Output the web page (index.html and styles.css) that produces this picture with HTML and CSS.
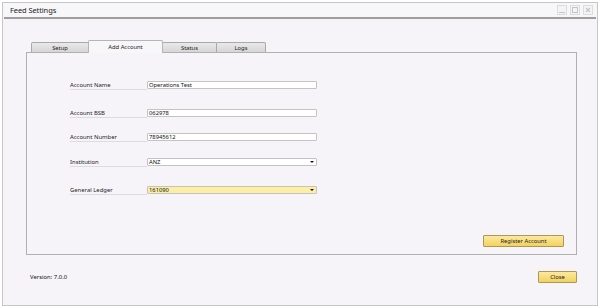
FILE: index.html
```html
<!DOCTYPE html>
<html>
<head>
<meta charset="utf-8">
<link rel="stylesheet" href="styles.css">
</head>
<body>
<div class="window">
  <div class="titlebar">
    <span class="title">Feed Settings</span>
    <div class="winbtns">
      <span class="wbtn"><svg width="8" height="8" viewBox="0 0 8 8"><path d="M1 6.5h6" stroke="#c4c4c4" stroke-width="1"/></svg></span>
      <span class="wbtn"><svg width="8" height="8" viewBox="0 0 8 8"><rect x="1.5" y="1.5" width="5" height="5" fill="none" stroke="#c4c4c4"/></svg></span>
      <span class="wbtn"><svg width="8" height="8" viewBox="0 0 8 8"><path d="M2 2l4 4M6 2l-4 4" stroke="#c4c4c4" stroke-width="1.2"/></svg></span>
    </div>
  </div>
  <div class="main">
    <div class="tabs">
      <div class="tab">Setup</div>
      <div class="tab active">Add Account</div>
      <div class="tab">Status</div>
      <div class="tab">Logs</div>
    </div>
    <div class="panel">
      <div class="form">
        <div class="row r1"><span class="label">Account Name</span><span class="field">Operations Test</span></div>
        <div class="row r2"><span class="label">Account BSB</span><span class="field">062978</span></div>
        <div class="row r3"><span class="label">Account Number</span><span class="field">78945612</span></div>
        <div class="row r4"><span class="label">Institution</span><span class="field select">ANZ<i class="arrow"></i></span></div>
        <div class="row r5"><span class="label">General Ledger</span><span class="field select hl">161090<i class="arrow"></i></span></div>
      </div>
      <div class="panel-actions"><button class="btn btn-register">Register Account</button></div>
    </div>
    <div class="footer">
      <span class="version">Version: 7.0.0</span>
      <button class="btn btn-close">Close</button>
    </div>
  </div>
</div>
</body>
</html>
```

FILE: styles.css
```css
* { box-sizing: border-box; }
html, body { margin: 0; padding: 0; }
body {
  background: #ffffff;
  padding: 2px;
  font-family: "Noto Sans", "Open Sans", sans-serif;
  color: #1a1a1a;
}
.window {
  width: 596px;
  height: 304px;
  border: 1px solid #c6c6c6;
  background: #f6f4f8;
  display: flex;
  flex-direction: column;
}
.titlebar {
  height: 16px;
  margin: 0 1px;
  border-bottom: 2px solid #9e9e9e;
  display: flex;
  align-items: center;
  justify-content: space-between;
  padding: 0 3px 0 6px;
  background: #f7f6f8;
}
.title {
  font-size: 7.5px;
  color: #222;
  letter-spacing: -0.1px;
}
.winbtns { display: flex; gap: 3px; align-items: center; }
.wbtn {
  width: 10px; height: 10px;
  border: 1px solid #dcdcdc;
  background: #f4f4f4;
  display: flex; align-items: center; justify-content: center;
}
.main {
  flex: 1;
  display: flex;
  flex-direction: column;
  padding: 21px 20px 0 23px;
}
.tabs {
  display: flex;
  align-items: flex-end;
  height: 12px;
  padding-left: 5px;
}
.tab {
  height: 10px;
  border: 1px solid #a9a9a9;
  border-bottom: none;
  border-radius: 2px 2px 0 0;
  background: linear-gradient(#e9e9e9, #d6d6d6);
  font-size: 5.8px;
  display: flex;
  align-items: center;
  justify-content: center;
  color: #222;
  margin-right: -1px;
}
.tab:nth-child(1) { width: 58px; }
.tab:nth-child(2) { width: 75px; }
.tab:nth-child(3) { width: 55px; }
.tab:nth-child(4) { width: 50px; }
.tab.active {
  background: #f7f6f9;
  position: relative;
  z-index: 1;
  margin-bottom: -1px;
  height: 13px;
  border-color: #b5b5b5;
}
.panel {
  height: 203px;
  border: 1px solid #b0b0b0;
  background: #f6f4f8;
  display: flex;
  flex-direction: column;
  justify-content: space-between;
  padding: 0 12px 7px 43px;
}
.form { display: flex; flex-direction: column; }
.row {
  display: flex;
  align-items: center;
  height: 8px;
}
.r1 { margin-top: 28px; }
.r2 { margin-top: 20px; }
.r3 { margin-top: 16px; }
.r4 { margin-top: 17px; }
.r5 { margin-top: 20px; }
.label {
  width: 77px;
  font-size: 5.9px;
  color: #222;
  border-bottom: 1px solid #dcdbe0;
  height: 9px;
  line-height: 8px;
  align-self: flex-start;
}
.field {
  width: 170px;
  height: 8px;
  border: 1px solid #c3c3c3;
  border-radius: 1px;
  background: #ffffff;
  font-size: 5.8px;
  line-height: 6px;
  padding-left: 1px;
  color: #111;
  position: relative;
}
.field.hl { background: #fcefa3; }
.arrow {
  position: absolute;
  right: 2px;
  top: 2px;
  width: 0; height: 0;
  border-left: 2px solid transparent;
  border-right: 2px solid transparent;
  border-top: 2.5px solid #111;
}
.panel-actions { display: flex; justify-content: flex-end; }
.btn {
  font-family: inherit;
  font-size: 5.8px;
  color: #222;
  border: 1px solid #a89a5c;
  background: linear-gradient(#fbe9a0, #f3d25c);
  height: 12px;
  padding: 0;
  border-radius: 1px;
}
.btn-register { width: 81px; }
.btn-close { width: 39px; }
.footer {
  display: flex;
  align-items: center;
  justify-content: space-between;
  padding: 16px 0 0 4px;
}
.version { font-size: 5.9px; color: #111; }
```
